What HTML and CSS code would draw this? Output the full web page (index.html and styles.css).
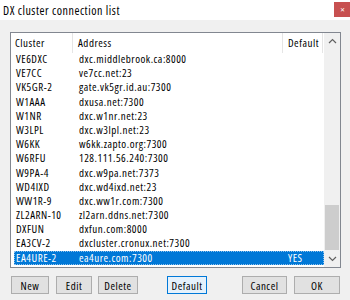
FILE: index.html
```html
<!doctype html>
<html lang="en">
<head>
    <meta charset="UTF-8">
    <title>DX cluster connection list</title>
    <link rel="stylesheet" href="styles.css">
</head>
<body>
    <div class="dialog">
        <div class="titlebar">
            <span class="title">DX cluster connection list</span>
            <span class="close">&#x2715;</span>
        </div>

        <div class="content">
            <!-- cluster list -->
            <div class="listview">
                <div class="list-main">
                    <div class="list-header">
                        <div class="hcell">Cluster</div>
                        <div class="hcell">Address</div>
                        <div class="hcell">Default</div>
                    </div>
                    <div class="list-rows">
                        <div class="row"><span>VE6DXC</span><span>dxc.middlebrook.ca:8000</span><span></span></div>
                        <div class="row"><span>VE7CC</span><span>ve7cc.net:23</span><span></span></div>
                        <div class="row"><span>VK5GR-2</span><span>gate.vk5gr.id.au:7300</span><span></span></div>
                        <div class="row"><span>W1AAA</span><span>dxusa.net:7300</span><span></span></div>
                        <div class="row"><span>W1NR</span><span>dxc.w1nr.net:23</span><span></span></div>
                        <div class="row"><span>W3LPL</span><span>dxc.w3lpl.net:23</span><span></span></div>
                        <div class="row"><span>W6KK</span><span>w6kk.zapto.org:7300</span><span></span></div>
                        <div class="row"><span>W6RFU</span><span>128.111.56.240:7300</span><span></span></div>
                        <div class="row"><span>W9PA-4</span><span>dxc.w9pa.net:7373</span><span></span></div>
                        <div class="row"><span>WD4IXD</span><span>dxc.wd4ixd.net:23</span><span></span></div>
                        <div class="row"><span>WW1R-9</span><span>dxc.ww1r.com:7300</span><span></span></div>
                        <div class="row"><span>ZL2ARN-10</span><span>zl2arn.ddns.net:7300</span><span></span></div>
                        <div class="row"><span>DXFUN</span><span>dxfun.com:8000</span><span></span></div>
                        <div class="row"><span>EA3CV-2</span><span>dxcluster.cronux.net:7300</span><span></span></div>
                        <div class="row selected"><span>EA4URE-2</span><span>ea4ure.com:7300</span><span>YES</span></div>
                    </div>
                </div>
                <div class="scrollbar">
                    <div class="arrow">
                        <svg width="9" height="6" viewBox="0 0 9 6"><path d="M1 5 L4.5 1.5 L8 5" fill="none" stroke="#606060" stroke-width="1.2"/></svg>
                    </div>
                    <div class="track"><div class="thumb"></div></div>
                    <div class="arrow">
                        <svg width="9" height="6" viewBox="0 0 9 6"><path d="M1 1 L4.5 4.5 L8 1" fill="none" stroke="#606060" stroke-width="1.2"/></svg>
                    </div>
                </div>
            </div>

            <!-- buttons -->
            <div class="buttons">
                <button class="btn btn-new">New</button>
                <button class="btn btn-edit">Edit</button>
                <button class="btn btn-delete">Delete</button>
                <button class="btn btn-default focused">Default</button>
                <button class="btn btn-cancel">Cancel</button>
                <button class="btn btn-ok">OK</button>
            </div>
        </div>
    </div>
</body>
</html>
```

FILE: styles.css
```css
body {
    margin: 0;
    font-family: "Open Sans", "Liberation Sans", Arial, sans-serif;
    font-stretch: condensed;
    font-size: 11px;
    letter-spacing: 0.5px;
    color: #000;
    background-color: #f0f0f0;
}

.dialog {
    width: 350px;
    height: 300px;
    background-color: #f0f0f0;
    overflow: hidden;
}

.titlebar {
    height: 20px;
    background-color: #fff;
    display: flex;
    align-items: center;
    justify-content: space-between;
}

.title {
    padding-left: 3px;
    font-size: 12px;
    letter-spacing: 0.55px;
    color: #000;
}

.close {
    width: 16px;
    height: 15px;
    margin-top: -1px;
    background-color: #c75050;
    color: #fff;
    font-size: 6px;
    letter-spacing: 0;
    display: flex;
    align-items: center;
    justify-content: center;
}

.content {
    padding: 12px 9px 0 10px;
}

.listview {
    height: 234px;
    border: 1px solid #828790;
    background-color: #fff;
    display: flex;
}

.list-main {
    flex: 1;
}

.list-header {
    height: 19px;
    display: grid;
    grid-template-columns: 62px 210px 40px;
}

.hcell {
    padding-left: 5px;
    line-height: 20px;
    border-right: 1px solid #e5e5e5;
}

.hcell:first-child {
    padding-left: 4px;
}

.list-rows {
    padding-left: 3px;
}

.row {
    height: 14.2px;
    line-height: 14px;
    display: grid;
    grid-template-columns: 59px 210px 40px;
    white-space: nowrap;
}

.row span {
    padding-left: 6px;
    overflow: hidden;
}

.row span:first-child {
    padding-left: 2px;
}

.row span:last-child {
    padding-left: 5px;
}

.row.selected {
    background-color: #0078d7;
    color: #fff;
    outline: 1px dotted #8cc2ee;
    outline-offset: -1px;
}

.scrollbar {
    width: 16px;
    background-color: #f0f0f0;
    display: flex;
    flex-direction: column;
}

.arrow {
    height: 16px;
    display: flex;
    align-items: center;
    justify-content: center;
}

.track {
    flex: 1;
    display: flex;
    flex-direction: column;
    justify-content: flex-end;
    padding: 0 1px 1px;
}

.thumb {
    height: 45px;
    background-color: #cdcdcd;
}

.buttons {
    display: flex;
    margin-top: 8px;
    padding-left: 1px;
}

.btn {
    height: 18px;
    padding: 0;
    font-family: inherit;
    font-stretch: inherit;
    font-size: 11px;
    letter-spacing: inherit;
    color: #000;
    background-color: #e1e1e1;
    border: 1px solid #adadad;
}

.btn-new { width: 38px; }
.btn-edit { width: 36px; margin-left: 7px; }
.btn-delete { width: 40px; margin-left: 6px; }
.btn-default { width: 40px; margin-left: 29px; }
.btn-cancel { width: 45px; margin-left: 35px; }
.btn-ok { width: 46px; margin-left: 7px; }

.btn.focused {
    background-color: #e5f1fb;
    border-color: #0078d7;
}
```
